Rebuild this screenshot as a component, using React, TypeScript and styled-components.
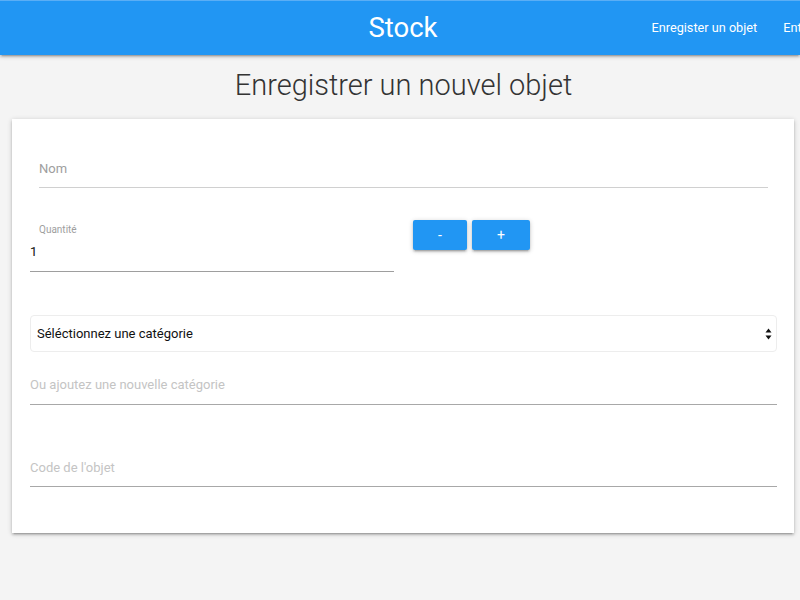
import React from "react";
import styled, { createGlobalStyle } from "styled-components";

const Global = createGlobalStyle`
  html, body { margin: 0; padding: 0; background: #f4f4f4; }
  body { font-family: Roboto, "Liberation Sans", sans-serif; overflow: hidden; }
  * { box-sizing: border-box; }
`;

const Page = styled.div`
  width: 800px;
  height: 600px;
  background: #f4f4f4;
  overflow: hidden;
`;

const Header = styled.header`
  height: 55px;
  background: #2196f3;
  border-top: 1px solid #5aaef5;
  display: grid;
  grid-template-columns: minmax(0, 1fr) auto minmax(0, 1fr);
  align-items: center;
  padding-left: 6px;
  overflow: hidden;
  box-shadow: 0 2px 2px 0 rgba(0, 0, 0, 0.14), 0 3px 1px -2px rgba(0, 0, 0, 0.12),
    0 1px 5px 0 rgba(0, 0, 0, 0.2);
  position: relative;
  z-index: 1;
`;

const Brand = styled.div`
  grid-column: 2;
  color: #fff;
  font-size: 27.5px;
  line-height: 32px;
  font-weight: 400;
`;

const Nav = styled.nav`
  grid-column: 3;
  justify-self: start;
  display: flex;
  gap: 26px;
  margin-left: 214px;
  white-space: nowrap;
`;

const NavLink = styled.span`
  color: #fff;
  font-size: 12.7px;
  font-weight: 400;
  line-height: 16px;
`;

const Title = styled.h1`
  margin: 12px 0 16px;
  text-align: center;
  font-size: 29px;
  line-height: 36px;
  font-weight: 300;
  color: #333;
  padding-left: 7px;
`;

const Card = styled.section`
  margin: 0 6px 0 12px;
  height: 414px;
  background: #fff;
  padding: 42px 17px 0 18px;
  box-shadow: 0 2px 2px 0 rgba(0, 0, 0, 0.14), 0 3px 1px -2px rgba(0, 0, 0, 0.12),
    0 1px 5px 0 rgba(0, 0, 0, 0.2);
`;

const LineField = styled.div<{ $inset?: number; $pb: number; $mt?: number; $line: string; $text: string }>`
  margin: ${(p) => p.$mt ?? 0}px ${(p) => p.$inset ?? 0}px 0;
  padding-bottom: ${(p) => p.$pb}px;
  border-bottom: 1px solid ${(p) => p.$line};
  color: ${(p) => p.$text};
  font-size: 13px;
  line-height: 16px;
`;

const QtyRow = styled.div`
  margin-top: 32px;
  display: flex;
  align-items: flex-start;
`;

const QtyField = styled.div`
  width: 364px;
  margin-right: 19px;
  padding-top: 4px;
  padding-bottom: 11px;
  border-bottom: 1px solid #9e9e9e;
`;

const SmallLabel = styled.div`
  margin-left: 9px;
  font-size: 10px;
  line-height: 12px;
  color: #9e9e9e;
`;

const Value = styled.div`
  margin-top: 8px;
  font-size: 13px;
  line-height: 16px;
  color: #111;
`;

const Buttons = styled.div`
  display: flex;
  gap: 5px;
`;

const Btn = styled.button<{ $w: number }>`
  width: ${(p) => p.$w}px;
  height: 30px;
  border: none;
  border-radius: 2px;
  background: #2196f3;
  color: #fff;
  font-family: Roboto, sans-serif;
  font-size: 14px;
  padding: 0;
  box-shadow: 0 2px 2px 0 rgba(0, 0, 0, 0.14), 0 3px 1px -2px rgba(0, 0, 0, 0.12),
    0 1px 5px 0 rgba(0, 0, 0, 0.2);
`;

const Select = styled.div`
  margin-top: 43px;
  height: 37px;
  border: 1px solid #ededed;
  border-radius: 4px;
  display: flex;
  align-items: center;
  justify-content: space-between;
  padding: 0 4px 0 6px;
  font-size: 13px;
  color: #111;
`;

const Arrows = () => (
  <svg width="7" height="12" viewBox="0 0 7 12">
    <path d="M3.5 0.5 L6.5 4.5 L0.5 4.5 Z" fill="#111" />
    <path d="M3.5 11.5 L6.5 7.5 L0.5 7.5 Z" fill="#111" />
  </svg>
);

export default function App() {
  return (
    <Page>
      <Global />
      <Header>
        <Brand>Stock</Brand>
        <Nav>
          <NavLink>Enregister un objet</NavLink>
          <NavLink>Entrées / Sorties</NavLink>
        </Nav>
      </Header>
      <Title>Enregistrer un nouvel objet</Title>
      <Card>
        <LineField $inset={9} $pb={10} $line="#d0d0d0" $text="#9e9e9e">
          Nom
        </LineField>
        <QtyRow>
          <QtyField>
            <SmallLabel>Quantité</SmallLabel>
            <Value>1</Value>
          </QtyField>
          <Buttons>
            <Btn $w={54}>-</Btn>
            <Btn $w={58}>+</Btn>
          </Buttons>
        </QtyRow>
        <Select>
          <span>Séléctionnez une catégorie</span>
          <Arrows />
        </Select>
        <LineField $mt={25} $pb={11} $line="#a8a8a8" $text="#c4c4c4">
          Ou ajoutez une nouvelle catégorie
        </LineField>
        <LineField $mt={55} $pb={10} $line="#a8a8a8" $text="#c4c4c4">
          Code de l'objet
        </LineField>
      </Card>
    </Page>
  );
}
